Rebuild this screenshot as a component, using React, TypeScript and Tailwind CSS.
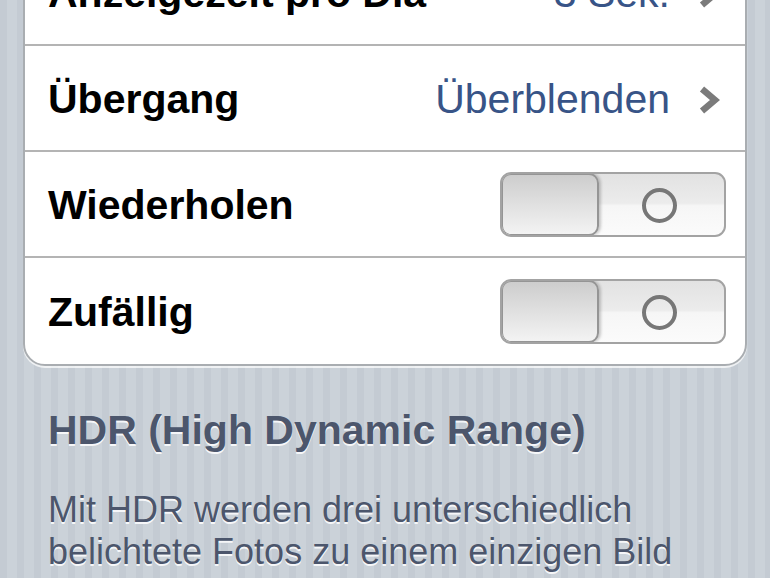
import React from 'react';

type Row =
    | { kind: 'link'; label: string; value: string }
    | { kind: 'toggle'; label: string };

const ROWS: Row[] = [
    { kind: 'link', label: 'Anzeigezeit pro Dia', value: '3 Sek.' },
    { kind: 'link', label: 'Übergang', value: 'Überblenden' },
    { kind: 'toggle', label: 'Wiederholen' },
    { kind: 'toggle', label: 'Zufällig' },
];

const Chevron: React.FC = () => (
    <svg width="22" height="28" viewBox="0 0 22 28" className="shrink-0">
        <polyline
            points="4,3 17,14 4,25"
            fill="none"
            stroke="#7b7b7b"
            strokeWidth="6.5"
            strokeLinejoin="miter"
        />
    </svg>
);

// Old-style iOS switch in its "off" position
const Switch: React.FC = () => (
    <div className="relative w-[226px] h-[65px] rounded-[11px] border-2 border-[#a3a3a3] overflow-hidden bg-[linear-gradient(180deg,#e2e2e2_0%,#ececec_48%,#f6f6f6_52%,#fbfbfb_100%)]">
        <div className="absolute left-[-1px] top-[-1px] bottom-[-1px] w-[98px] rounded-[10px] border-2 border-[#959595] bg-[linear-gradient(180deg,#cdcdcd_0%,#e2e2e2_55%,#f3f3f3_100%)] shadow-[2px_0_3px_rgba(0,0,0,0.2)]" />
        <div className="absolute left-[140px] top-[14px] w-[35px] h-[35px] rounded-full border-[4px] border-[#777777]" />
    </div>
);

const SettingsRow: React.FC<{ row: Row; last: boolean }> = ({ row, last }) => (
    <div
        className={`h-[106px] flex items-center pl-[23px] ${
            row.kind === 'link' ? 'pr-[25px]' : 'pr-[19px]'
        } ${last ? '' : 'border-b-2 border-[#b4b4b4]'}`}
    >
        <span className="flex-1 text-[41px] font-bold text-black leading-none pt-[3px]">{row.label}</span>
        {row.kind === 'link' ? (
            <div className="flex items-center gap-[28px] pt-[3px]">
                <span className="text-[41px] text-[#385487] leading-none">{row.value}</span>
                <Chevron />
            </div>
        ) : (
            <Switch />
        )}
    </div>
);

const App: React.FC = () => {
    return (
        <div className="w-[770px] h-[578px] overflow-hidden font-['Liberation_Sans',Arial,sans-serif] bg-[repeating-linear-gradient(90deg,#c4cbd3_0px,#c4cbd3_7px,#cbd2d9_7px,#cbd2d9_17px)]">
            {/* Grouped table card */}
            <div className="mx-[23px] mt-[-62px] bg-white border-2 border-[#a9adb1] rounded-[22px] shadow-[0_2px_0_rgba(255,255,255,0.7)]">
                {ROWS.map((row, i) => (
                    <SettingsRow key={row.label} row={row} last={i === ROWS.length - 1} />
                ))}
            </div>

            {/* Section footer */}
            <div className="px-[48px] text-[#4c566c] [text-shadow:0_2px_0_rgba(255,255,255,0.85)]">
                <h3 className="mt-[40px] text-[41px] font-bold leading-[48px]">HDR (High Dynamic Range)</h3>
                <p className="mt-[35px] w-[672px] text-[36px] leading-[42px]">
                    Mit HDR werden drei unterschiedlich belichtete Fotos zu einem einzigen Bild
                    zusammengeführt. Bewahren Sie das normal belichtete Foto zusätzlich zur HDR-Version auf.
                </p>
            </div>
        </div>
    );
};

export default App;
